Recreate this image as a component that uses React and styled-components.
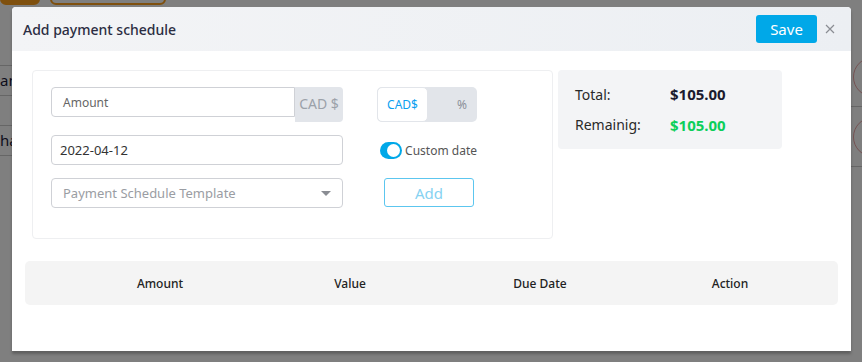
import React from 'react';
import styled, { createGlobalStyle } from 'styled-components';

const GlobalStyle = createGlobalStyle`
  html, body {
    margin: 0;
    padding: 0;
    width: 862px;
    height: 362px;
    overflow: hidden;
    font-family: "Noto Sans", "Open Sans", sans-serif;
    background: #fff;
  }
  * { box-sizing: border-box; }
`;

// page behind the modal
const Page = styled.div`
  position: relative;
  width: 862px;
  height: 362px;
  background: #fff;
  overflow: hidden;
`;

const TopBar = styled.div`
  display: flex;
  gap: 10px;
  height: 10px;
  margin-top: -22px;
`;

const PageButton = styled.div`
  width: ${props => props.w}px;
  height: 27px;
  border-radius: 6px;
  background: ${props => (props.filled ? '#ffa01c' : 'transparent')};
  border: 2px solid #ffa01c;
`;

const PageBody = styled.div`
  display: flex;
  justify-content: space-between;
  margin-top: 30px;
`;

const LeftList = styled.div`
  width: 120px;
  margin-top: 47px;
`;

const LeftRow = styled.div`
  height: 30px;
  border-top: 1px solid #ccc;
  font-size: 15px;
  color: #1b1b3a;
  line-height: 28px;
  white-space: nowrap;
`;

const RightList = styled.div`
  width: 120px;
  margin-top: 29px;
`;

const RightRow = styled.div`
  height: 60px;
  border-bottom: 1px solid #ccc;
  display: flex;
  align-items: center;
  justify-content: flex-end;
`;

const Avatar = styled.div`
  width: 40px;
  height: 40px;
  border-radius: 50%;
  border: 1px solid #e9a4a4;
  margin-right: -31px;
`;

const Overlay = styled.div`
  position: absolute;
  inset: 0;
  background: rgba(0, 0, 0, 0.5);
`;

// modal
const Modal = styled.div`
  position: absolute;
  left: 12px;
  top: 7px;
  width: 839px;
  height: 344px;
  background: #fff;
  border-radius: 4px 4px 0 0;
  box-shadow: 0 3px 3px rgba(0, 0, 0, 0.25);
  display: flex;
  flex-direction: column;
`;

const Header = styled.div`
  height: 44px;
  display: flex;
  align-items: center;
  padding: 0 16px 0 11px;
  background: linear-gradient(to right, #f3f4f6, #eceff3);
  border-radius: 4px 4px 0 0;
`;

const Title = styled.div`
  flex: 1;
  font-size: 14px;
  font-weight: 500;
  color: #2b2d42;
`;

const SaveButton = styled.button`
  width: 61px;
  height: 28px;
  border: none;
  border-radius: 3px;
  background: #00a8e8;
  color: #fff;
  font-family: inherit;
  font-size: 15px;
  padding: 0;
`;

const Close = styled.span`
  margin-left: 8px;
  width: 10px;
  display: flex;
  color: #8a8d93;
`;

const Body = styled.div`
  padding: 19px 13px 0;
`;

const TopRow = styled.div`
  display: flex;
  gap: 5px;
  padding-left: 7px;
`;

const Card = styled.div`
  width: 521px;
  height: 169px;
  border: 1px solid #eeeff1;
  border-radius: 4px;
  padding: 16px 18px;
  display: grid;
  grid-template-columns: 292px 100px;
  grid-template-rows: 35px 30px 30px;
  column-gap: 34px;
  row-gap: 13px;
`;

const InputGroup = styled.div`
  display: flex;
  align-items: flex-start;
`;

const Field = styled.div`
  height: 30px;
  flex: 1;
  display: flex;
  align-items: center;
  border: 1px solid #cfd1d6;
  border-radius: ${props => (props.joined ? '4px 0 0 4px' : '4px')};
  padding: 0 ${props => (props.pad || 11)}px;
  font-size: ${props => props.size || 13}px;
  color: ${props => props.color || '#333'};
  background: #fff;
`;

const Addon = styled.div`
  width: 48px;
  height: 35px;
  background: #e2e5ea;
  border-radius: 0 4px 4px 0;
  color: #9ba1a9;
  font-size: 14px;
  display: flex;
  align-items: center;
  justify-content: center;
  padding-bottom: 2px;
`;

const Caret = styled.span`
  margin-left: auto;
  width: 0;
  height: 0;
  border-left: 5px solid transparent;
  border-right: 5px solid transparent;
  border-top: 5px solid #8a8d93;
`;

const Segment = styled.div`
  display: flex;
  background: #e2e5ea;
  border-radius: 5px;
  width: 100px;
  height: 35px;
`;

const SegmentItem = styled.div`
  width: ${props => props.w}px;
  display: flex;
  align-items: center;
  justify-content: ${props => (props.active ? 'center' : 'flex-end')};
  padding-right: ${props => (props.active ? 0 : 10)}px;
  font-size: 12px;
  color: ${props => (props.active ? '#0a9ff0' : '#8b9099')};
  background: ${props => (props.active ? '#fff' : 'transparent')};
  border: ${props => (props.active ? '1px solid #e2e5ea' : 'none')};
  border-radius: 5px;
`;

const SwitchRow = styled.div`
  display: flex;
  align-items: center;
  padding-left: 3px;
  font-size: 12px;
  color: #555;
  white-space: nowrap;
`;

const Switch = styled.div`
  width: 34px;
  height: 17px;
  border-radius: 9px;
  background: #00a8e8;
  position: relative;
  margin-right: 3px;
  &:after {
    content: '';
    position: absolute;
    right: 2px;
    top: 2px;
    width: 13px;
    height: 13px;
    border-radius: 50%;
    background: #fff;
  }
`;

const AddButton = styled.button`
  margin-left: 7px;
  width: 90px;
  height: 29px;
  border: 1px solid #5cc6ef;
  border-radius: 3px;
  background: #fff;
  color: #86d2f2;
  font-family: inherit;
  font-size: 15px;
  padding: 0;
`;

const Summary = styled.div`
  width: 224px;
  height: 79px;
  background: #f3f4f6;
  border-radius: 4px;
  padding: 14px 17px;
  display: grid;
  grid-template-columns: 95px auto;
  row-gap: 10px;
  align-items: center;
`;

const Label = styled.div`
  font-size: 14px;
  color: #2a2a2a;
`;

const Money = styled.div`
  font-size: 15px;
  font-weight: 700;
  color: ${props => (props.green ? '#0ccf5a' : '#1b1b2e')};
`;

const TableHead = styled.div`
  margin-top: 22px;
  height: 44px;
  background: #f4f4f4;
  border-radius: 5px;
  display: grid;
  grid-template-columns: repeat(4, 190px);
  padding-left: 40px;
  align-items: center;
`;

const HeadCell = styled.div`
  text-align: center;
  font-size: 12px;
  font-weight: 500;
  color: #222;
`;

export default function App() {
  return (
    <>
      <GlobalStyle />
      <Page>
        <TopBar>
          <PageButton filled w={40} />
          <PageButton w={116} />
        </TopBar>
        <PageBody>
          <LeftList>
            <LeftRow>an</LeftRow>
            <LeftRow />
            <LeftRow>ha</LeftRow>
            <LeftRow />
          </LeftList>
          <RightList>
            <RightRow>
              <Avatar />
            </RightRow>
            <RightRow>
              <Avatar />
            </RightRow>
          </RightList>
        </PageBody>
        <Overlay />
        <Modal>
          <Header>
            <Title>Add payment schedule</Title>
            <SaveButton>Save</SaveButton>
            <Close>
              <svg width="10" height="10" viewBox="0 0 10 10">
                <path d="M1 1L9 9M9 1L1 9" stroke="currentColor" strokeWidth="1.2" />
              </svg>
            </Close>
          </Header>
          <Body>
            <TopRow>
              <Card>
                <InputGroup>
                  <Field joined size={12} color="#666">Amount</Field>
                  <Addon>CAD $</Addon>
                </InputGroup>
                <Segment>
                  <SegmentItem active w={51}>CAD$</SegmentItem>
                  <SegmentItem w={49}>%</SegmentItem>
                </Segment>
                <Field pad={8}>2022-04-12</Field>
                <SwitchRow>
                  <Switch />
                  Custom date
                </SwitchRow>
                <Field color="#9a9da3">
                  Payment Schedule Template
                  <Caret />
                </Field>
                <div>
                  <AddButton>Add</AddButton>
                </div>
              </Card>
              <Summary>
                <Label>Total:</Label>
                <Money>$105.00</Money>
                <Label>Remainig:</Label>
                <Money green>$105.00</Money>
              </Summary>
            </TopRow>
            <TableHead>
              <HeadCell>Amount</HeadCell>
              <HeadCell>Value</HeadCell>
              <HeadCell>Due Date</HeadCell>
              <HeadCell>Action</HeadCell>
            </TableHead>
          </Body>
        </Modal>
      </Page>
    </>
  );
}
